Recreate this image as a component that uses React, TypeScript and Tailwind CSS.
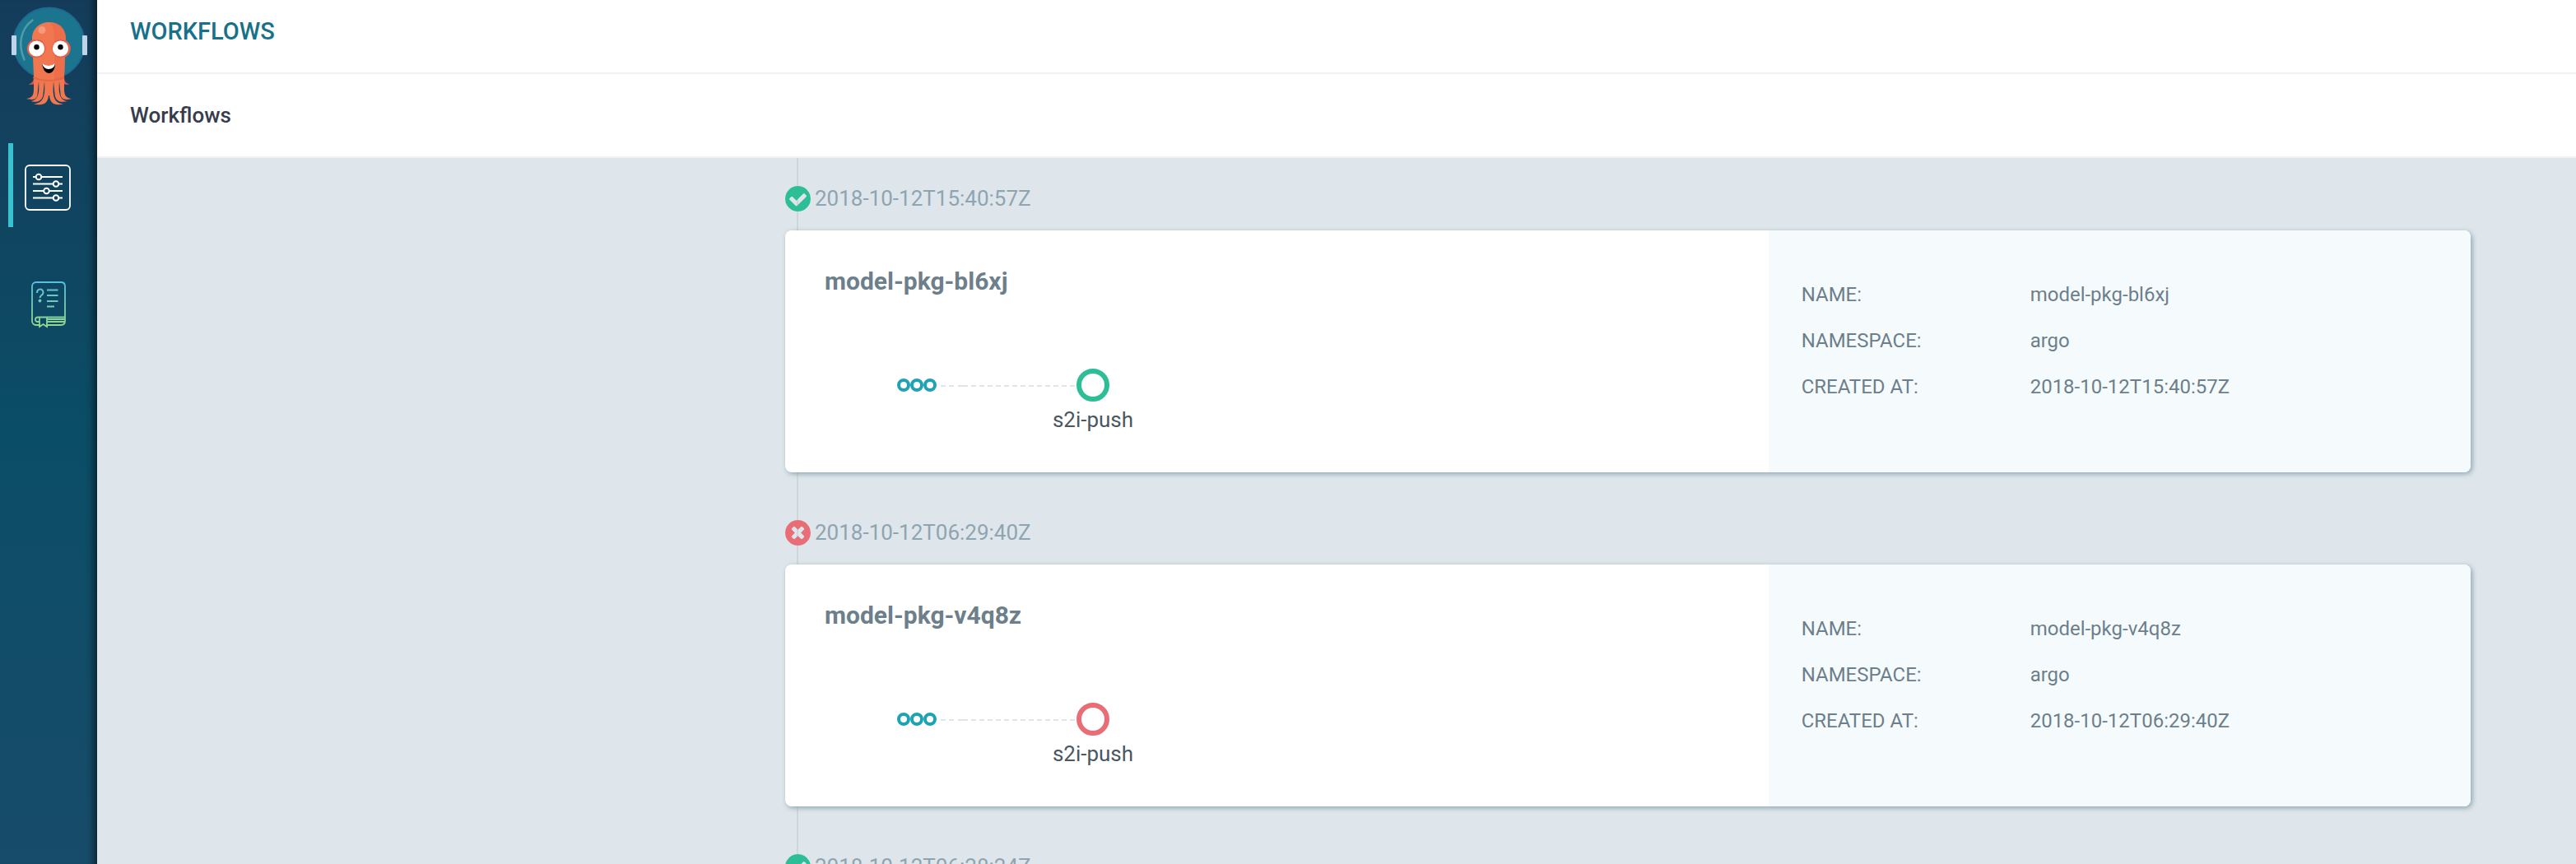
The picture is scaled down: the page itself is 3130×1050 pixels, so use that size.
import React from 'react';

type Phase = 'ok' | 'failed';
type Workflow = { createdAt: string; phase: Phase; details?: { name: string; namespace: string; step: string } };

const workflows: Workflow[] = [
  { createdAt: '2018-10-12T15:40:57Z', phase: 'ok', details: { name: 'model-pkg-bl6xj', namespace: 'argo', step: 's2i-push' } },
  { createdAt: '2018-10-12T06:29:40Z', phase: 'failed', details: { name: 'model-pkg-v4q8z', namespace: 'argo', step: 's2i-push' } },
  { createdAt: '2018-10-12T06:28:24Z', phase: 'ok' },
];

function Logo() {
  return (
    <svg viewBox="0 0 118 140" className="h-[140px] w-full" aria-label="Argo" role="img">
      <circle cx="59.500" cy="52.500" r="43" fill="#1b758e" stroke="#20698f" strokeWidth="2" />
      <rect x="14" y="43" width="6" height="24" rx="1" fill="#bfd3ea" />
      <rect x="100" y="43" width="6" height="24" rx="1" fill="#bfd3ea" />
      <path d="M39.500 24.500C24 36 22 55 29.500 72.500" fill="none" stroke="#4f9daa" strokeWidth="2.500" strokeLinecap="round" />
      <path d="M41 92c0 6-1 9-6.500 10.500C40 103.500 44 102 45 97zM78 92c0 6 1 9 6.500 10.500C79 103.500 75 102 74 97z" fill="#d9574d" />
      <path
        d="M39 47C39 35 48 27 59.500 27S80 35 80 47L78 92V108C78 116 80 119 87 120C79 122 74 121 73.500 114L72 99C71 112 72 122 82 123C72 125.500 67 122 66.500 114L65 99C64 115 64 125 77 126.500C66 128.500 61 126 60 116H59C58 126 53 128.500 41 126.500C54 125 55 115 54 99L52.500 114C52 122 46 125.500 37 123C47 122 48 112 47 99L45.500 114C45 121 41 122 32 120C39 119 41 116 41 108V92Z"
        fill="#f0774f"
      />
      <path d="M60 27C74 27 80 36 80 47L78 96C72 98 68 98 66 98V47C66 38 65 31 60 27Z" fill="#ea6b48" opacity="0.700" />
      <path d="M40 94Q59 102 78 94" fill="none" stroke="#e2603f" strokeWidth="2" opacity="0.700" />
      <circle cx="51" cy="36.500" r="4.500" fill="#f59a7c" />
      <circle cx="44" cy="59" r="11.300" fill="#e6604c" />
      <circle cx="74.500" cy="59" r="11.300" fill="#e6604c" />
      <circle cx="44.500" cy="59" r="9.600" fill="#fff" />
      <circle cx="73.500" cy="59" r="9.600" fill="#fff" />
      <circle cx="44.500" cy="57.300" r="3.200" />
      <circle cx="73.500" cy="57.300" r="3.200" />
      <path d="M51 77Q59 84 67 77C67 84 64 89 59.500 89S52 84 51 77Z" />
      <path d="M51 77Q59 83 67 77Q66 84 59 84Q53 84 51 77Z" fill="#fff" />
    </svg>
  );
}

function TimelineIcon() {
  const rows = [
    [17, 15],
    [38, 23.5],
    [26.5, 32],
    [38, 40.5],
  ];
  return (
    <svg viewBox="0 0 56 56" className="size-14" fill="none" stroke="#fff" strokeWidth="2" aria-hidden="true">
      <rect x="1" y="1" width="54" height="54" rx="5" strokeWidth="1.800" />
      {rows.map(([cx, cy]) => (
        <g key={cy}>
          <path d={`M10 ${cy}H${cx - 3.5}M${cx + 3.5} ${cy}H46`} />
          <circle cx={cx} cy={cy} r="3.300" />
        </g>
      ))}
    </svg>
  );
}

function HelpIcon() {
  return (
    <svg viewBox="0 0 42 58" className="h-[58px] w-[42px]" fill="none" stroke="url(#help-gradient)" strokeWidth="1.800" aria-hidden="true">
      <defs>
        <linearGradient id="help-gradient" gradientUnits="userSpaceOnUse" x1="0" y1="0" x2="0" y2="56">
          <stop offset="0" stopColor="#54c0e0" />
          <stop offset="1" stopColor="#94d88b" />
        </linearGradient>
      </defs>
      <path d="M10 53H6C3 53 1 51 1 48V6C1 3 3 1 6 1H36C39 1 41 3 41 6V48C41 51 39 53 36 53H19" />
      <path d="M41 43.500H8C4 43.500 4 49 8 49H10M19 49H40M19 46H40" />
      <path d="M10 44V55L14.500 52L19 55V44" />
      <path d="M7 14C7 8 14.500 8 14.500 13.500C14.500 17 10.500 16.500 10.500 20" strokeWidth="2" />
      <circle cx="10.500" cy="23.500" r="1.900" fill="url(#help-gradient)" stroke="none" />
      <path d="M19 10.500h13.500M19 17h13.500M19 24h13.500M19 30.500h9" strokeWidth="2" />
    </svg>
  );
}

function StatusIcon({ phase }: { phase: Phase }) {
  return phase === 'ok' ? (
    <svg viewBox="0 0 1536 1536" className="w-[31px] shrink-0 fill-[#2dbe97]" role="img" aria-label="Succeeded">
      <path d="M1284 606q0-28-18-46l-91-90q-19-19-45-19t-45 19l-408 407-226-226q-19-19-45-19t-45 19l-91 90q-18 18-18 46 0 27 18 45l362 362q19 19 45 19 27 0 46-19l543-543q18-18 18-45zM1536 768q0 209-103 385.500t-279.500 279.500-385.500 103-385.500-103-279.500-279.500-103-385.500 103-385.500 279.500-279.500 385.500-103 385.500 103 279.500 279.500 103 385.500z" />
    </svg>
  ) : (
    <svg viewBox="0 0 1536 1536" className="w-[31px] shrink-0 fill-[#e96d76]" role="img" aria-label="Failed">
      <path d="M1149 994q0-26-19-45l-181-181 181-181q19-19 19-45 0-27-19-46l-90-90q-19-19-46-19-26 0-45 19l-181 181-181-181q-19-19-45-19-27 0-46 19l-90 90q-19 19-19 46 0 26 19 45l181 181-181 181q-19 19-19 45 0 27 19 46l90 90q19 19 46 19 26 0 45-19l181-181 181 181q19 19 45 19 27 0 46-19l90-90q19-19 19-46zM1536 768q0 209-103 385.500t-279.500 279.500-385.500 103-385.500-103-279.500-279.500-103-385.500 103-385.500 279.500-279.500 385.500-103 385.500 103 279.500 279.500 103 385.500z" />
    </svg>
  );
}

function Graph({ phase, step }: { phase: Phase; step: string }) {
  return (
    <div className="ml-[88px] flex flex-col">
      <div className="flex items-center">
        <svg viewBox="0 0 48 16" className="h-4 w-12 shrink-0" fill="none" stroke="#1fa2b3" strokeWidth="4" aria-hidden="true">
          <circle cx="8" cy="8" r="6" />
          <circle cx="24" cy="8" r="6" />
          <circle cx="40" cy="8" r="6" />
        </svg>
        <svg viewBox="0 0 165 2" className="mt-0.5 ml-[5px] h-0.5 w-[165px]" aria-hidden="true">
          <path d="M0 1H6M10 1H16M21 1H33M37 1H165" stroke="#dee6eb" strokeWidth="2" strokeDasharray="6 4" />
          <path d="M21 1H33" stroke="#dee6eb" strokeWidth="2" />
        </svg>
        <div className={`size-10 rounded-full border-6 ${phase === 'ok' ? 'border-[#2dbe97]' : 'border-[#e96d76]'}`} />
      </div>
      <div className="mt-1.5 ml-[158px] w-40 text-center text-[26px] leading-8 text-[#495763]">{step}</div>
    </div>
  );
}

export default function App() {
  return (
    <div className="flex h-screen overflow-hidden bg-[#dee6eb] font-[Roboto,sans-serif]">
      <nav className="flex w-[118px] shrink-0 flex-col bg-linear-to-b from-[#143c5a] via-[#0a4d66] to-[#174c6a] shadow-[inset_-12px_0_10px_-8px_rgba(0,0,0,0.55)]">
        <a href="#home">
          <Logo />
        </a>
        <a href="#workflows" aria-label="Workflows" className="mt-[34px] ml-2.5 flex h-[102px] items-center border-l-6 border-[#38c2d0] pt-1.5 pl-3.5">
          <TimelineIcon />
        </a>
        <a href="#help" aria-label="Help" className="mt-[66px] ml-[38px]">
          <HelpIcon />
        </a>
      </nav>
      <div className="flex min-w-0 flex-1 flex-col">
        <header className="bg-white">
          <h1 className="h-[90px] border-b-2 border-[#eff3f6] px-10 pt-[18px] text-[29px] leading-10 font-medium text-[#18718a]">WORKFLOWS</h1>
          <div className="flex h-[102px] items-center border-b-2 border-[#eff3f6] px-10 text-[26px] font-medium text-[#363c4a]">Workflows</div>
        </header>
        <main className="relative min-h-0 flex-1 overflow-hidden pr-32 pl-[836px]">
          <div className="absolute top-0 bottom-0 left-[850px] w-0.5 bg-[#ccd6dd]" />
          {workflows.map((w) => (
            <article key={w.createdAt} className="relative pt-7 pb-6">
              <div className="flex h-[60px] items-start gap-[5px] pt-1.5 text-[26px] leading-[30px] text-[#8fa4b1]">
                <StatusIcon phase={w.phase} />
                <time dateTime={w.createdAt}>{w.createdAt}</time>
              </div>
              {w.details && (
                <div className="grid h-[294px] grid-cols-12 overflow-hidden rounded-lg bg-white shadow-[2px_2px_6px_#8fa4b1]">
                  <section className="col-span-7 px-12 pt-11">
                    <h2 className="mb-[88px] text-[30px] leading-9 font-bold text-[#6d7f8b]">{w.details.name}</h2>
                    <Graph phase={w.phase} step={w.details.step} />
                  </section>
                  <dl className="col-span-5 grid grid-cols-[278px_1fr] content-start bg-[#f5fbfd] pt-[50px] pl-10 text-2xl leading-[56px] text-[#6d7f8b]">
                    <dt>NAME:</dt>
                    <dd>{w.details.name}</dd>
                    <dt>NAMESPACE:</dt>
                    <dd>{w.details.namespace}</dd>
                    <dt>CREATED AT:</dt>
                    <dd>{w.createdAt}</dd>
                  </dl>
                </div>
              )}
            </article>
          ))}
        </main>
      </div>
    </div>
  );
}
